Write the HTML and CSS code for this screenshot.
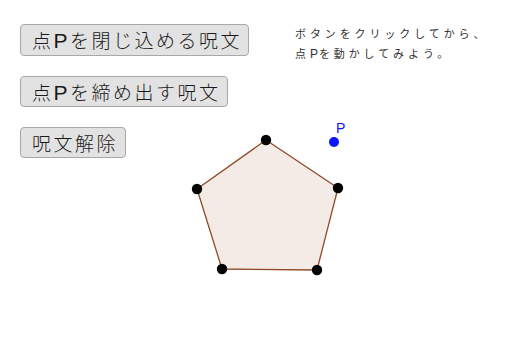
FILE: index.html
```html
<!DOCTYPE html>
<html lang="ja">
<head>
<meta charset="utf-8">
<link rel="stylesheet" href="styles.css">
</head>
<body>
<div class="page">
  <div class="buttons">
    <button class="btn w1">点<span class="latin">P</span>を閉じ込める呪文</button>
    <button class="btn w2">点<span class="latin">P</span>を締め出す呪文</button>
    <button class="btn w3">呪文解除</button>
  </div>
  <div class="note">
    <p>ボタンをクリックしてから、</p>
    <p>点<span class="latin">P</span>を動かしてみよう。</p>
  </div>
  <svg class="canvas" width="512" height="340" viewBox="0 0 512 340">
    <polygon points="266,140 338,188 317,270 222,269 197,189" fill="#f4ebe6" stroke="#8e4a26" stroke-width="1.3"/>
    <circle cx="266" cy="140" r="5.2" fill="#000"/>
    <circle cx="338" cy="188" r="5.2" fill="#000"/>
    <circle cx="317" cy="270" r="5.2" fill="#000"/>
    <circle cx="222" cy="269" r="5.2" fill="#000"/>
    <circle cx="197" cy="189" r="5.2" fill="#000"/>
    <circle cx="334" cy="142" r="5" fill="#0a14ff"/>
    <text x="336" y="133" class="plabel">P</text>
  </svg>
</div>
</body>
</html>
```
FILE: styles.css
```css
html, body {
  margin: 0;
  padding: 0;
  background: #fff;
}
.page {
  position: relative;
  width: 512px;
  height: 340px;
  display: flex;
  flex-direction: row;
  align-items: flex-start;
  overflow: hidden;
}
.buttons {
  display: flex;
  flex-direction: column;
  align-items: flex-start;
  gap: 20px;
  padding: 24px 0 0 20px;
}
.btn {
  box-sizing: border-box;
  height: 32px;
  padding: 0 0 0 11px;
  margin: 0;
  background: #e2e2e2;
  border: 1px solid #a8a8a8;
  border-radius: 4px;
  font-family: "Noto Sans CJK JP", sans-serif;
  font-weight: 300;
  font-size: 19px;
  letter-spacing: 2.5px;
  color: #1a1a1a;
  text-align: left;
  line-height: 30px;
  white-space: nowrap;
}
.btn .latin {
  font-family: "Liberation Sans", Arial, sans-serif;
  font-weight: 400;
  font-size: 21px;
}
.w1 { width: 229px; }
.w2 { width: 208px; height: 31px; }
.w3 { width: 106px; height: 31px; }
.note {
  margin-left: 46px;
  padding-top: 23px;
  font-family: "Noto Sans CJK JP", sans-serif;
  font-size: 11px;
  letter-spacing: 3.9px;
  color: #333;
}
.note .latin {
  font-family: "Liberation Sans", Arial, sans-serif;
  font-size: 12px;
  letter-spacing: 1px;
}
.note p {
  margin: 0;
  line-height: 20px;
}
.canvas {
  position: absolute;
  left: 0;
  top: 0;
}
.plabel {
  font-family: "Liberation Sans", Arial, sans-serif;
  font-size: 14px;
  fill: #0a14ff;
}
```
